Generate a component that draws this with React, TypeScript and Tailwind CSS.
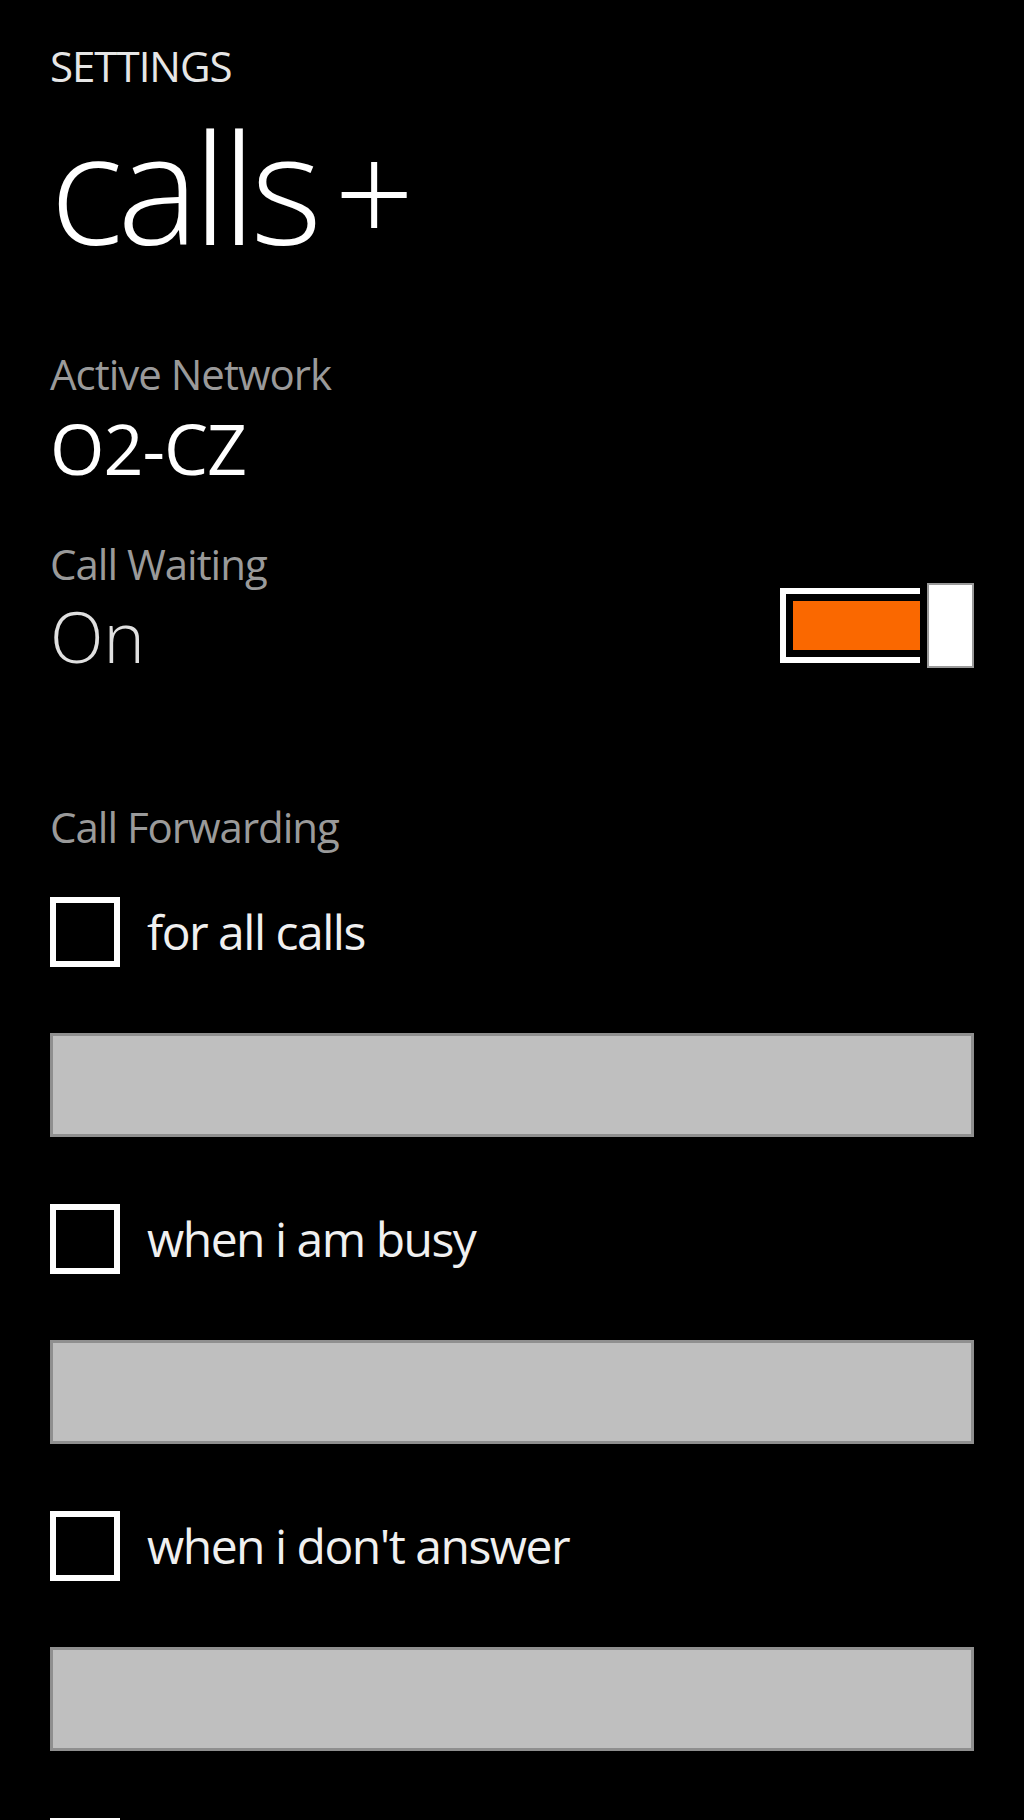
import React from 'react'

const FONT = "font-['Open_Sans','Liberation_Sans',sans-serif]"

function Checkbox({ label }: { label?: string }) {
  return (
    <div className="flex items-center gap-[27px]">
      <div className="w-[70px] h-[70px] border-[6px] border-white bg-black flex-shrink-0" />
      {label && (
        <span className="text-[48px] leading-[48px] text-[#f0f0f0] tracking-[-1.5px]">{label}</span>
      )}
    </div>
  )
}

function TextField() {
  return <div className="h-[104px] bg-[#bfbfbf] border-[3px] border-[#8f8f8f]" />
}

function ForwardOption({ label }: { label: string }) {
  return (
    <div className="flex flex-col">
      <div className="mt-[67px]">
        <Checkbox label={label} />
      </div>
      <div className="mt-[66px]">
        <TextField />
      </div>
    </div>
  )
}

export default function App() {
  return (
    <div className={`${FONT} w-[1024px] h-[1820px] overflow-hidden bg-black text-white px-[50px]`}>
      <div className="pt-[45px] text-[42px] leading-[42px] text-[#e6e6e6] tracking-[-1px]">SETTINGS</div>
      <div className="mt-[21px] h-[154px] overflow-visible flex items-baseline text-[154px] leading-[154px] font-light">
        <span className="tracking-[-6px]">calls</span>
        <span className="ml-[18px] text-[140px] leading-[140px]">+</span>
      </div>

      <div className="mt-[91px] text-[42px] leading-[42px] text-[#9a9a9a] tracking-[-1px]">Active Network</div>
      <div className="mt-[18px] text-[70px] leading-[70px] tracking-[-1px]">O2-CZ</div>

      <div className="mt-[60px] flex items-start justify-between">
        <div className="flex flex-col">
          <div className="text-[42px] leading-[42px] text-[#9a9a9a] tracking-[-1px]">Call Waiting</div>
          <div className="mt-[16px] text-[70px] leading-[70px] font-light text-[#e0e0e0]">On</div>
        </div>
        <div className="mt-[40px] flex items-center gap-[7px]">
          <div className="w-[140px] h-[75px] border-[6px] border-r-0 border-white p-[7px] pr-0">
            <div className="w-full h-full bg-[#fa6800]" />
          </div>
          <div className="w-[47px] h-[85px] bg-white border-2 border-[#9a9a9a]" />
        </div>
      </div>

      <div className="mt-[135px] text-[42px] leading-[42px] text-[#9a9a9a] tracking-[-1px]">Call Forwarding</div>

      <div className="mt-[49px]">
        <Checkbox label="for all calls" />
      </div>
      <div className="mt-[66px]">
        <TextField />
      </div>

      <ForwardOption label="when i am busy" />
      <ForwardOption label="when i don't answer" />

      <div className="mt-[67px]">
        <Checkbox />
      </div>
    </div>
  )
}
